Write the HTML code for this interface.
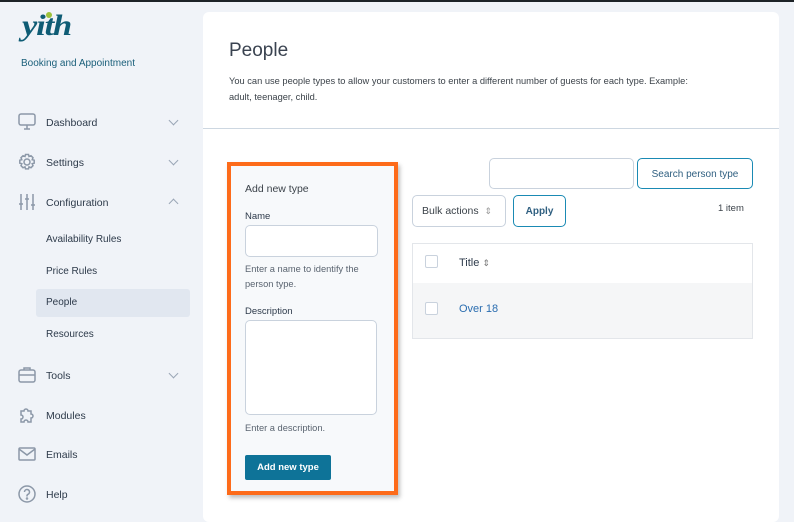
<!DOCTYPE html>
<html><head><style>
*{box-sizing:border-box;margin:0;padding:0}
body{width:794px;height:510px;overflow:hidden;background:#f0f3f8;font-family:"Liberation Sans",sans-serif;position:relative;color:#3c434a}
.a{position:absolute}
.nav{font-size:10.5px;color:#2d3a4a}
.sub{font-size:10px;color:#2d3a4a}
.chev{width:7px;height:7px;border-right:1.5px solid #9aa6b6;border-bottom:1.5px solid #9aa6b6;transform:rotate(45deg)}
.up{transform:rotate(-135deg)}
</style></head><body>
<div class="a" style="left:0;top:0;width:794px;height:2px;background:#1d2327"></div>
<div class="a" style="left:22px;top:9px;font-family:'Liberation Serif',serif;font-style:italic;font-weight:bold;font-size:30px;color:#0f5c75;letter-spacing:-1px;transform:scaleX(1.15);transform-origin:left">yith</div>
<div class="a" style="left:46px;top:12px;width:6px;height:6px;border-radius:50%;background:#9dc23b"></div>
<div class="a" style="left:21px;top:58px;font-size:10px;color:#1a5f7a">Booking and Appointment</div>

<svg class="a" style="left:18px;top:113px" width="18" height="18" viewBox="0 0 18 18" fill="none" stroke="#8c98a8" stroke-width="1.5"><rect x="1" y="1" width="16" height="11" rx="2"/><path d="M6 16h6M9 12v4"/></svg>
<div class="a nav" style="left:46px;top:117px">Dashboard</div>
<div class="a chev" style="left:170px;top:117px"></div>
<svg class="a" style="left:18px;top:153px" width="18" height="18" viewBox="0 0 18 18" fill="none" stroke="#8c98a8" stroke-width="1.5"><circle cx="9" cy="9" r="3"/><path d="M7.5 1.5h3l.5 2 2-.8 2 2-.8 2 2 .5v3l-2 .5.8 2-2 2-2-.8-.5 2h-3l-.5-2-2 .8-2-2 .8-2-2-.5v-3l2-.5-.8-2 2-2 2 .8z"/></svg>
<div class="a nav" style="left:46px;top:157px">Settings</div>
<div class="a chev" style="left:170px;top:157px"></div>
<svg class="a" style="left:18px;top:193px" width="18" height="18" viewBox="0 0 18 18" fill="none" stroke="#8c98a8" stroke-width="1.5"><path d="M3 1v16M9 1v16M15 1v16"/><path d="M1 11h4M7 6h4M13 12h4"/></svg>
<div class="a nav" style="left:46px;top:197px">Configuration</div>
<div class="a chev up" style="left:170px;top:200px"></div>
<div class="a sub" style="left:46px;top:234px">Availability Rules</div>
<div class="a sub" style="left:46px;top:266px">Price Rules</div>
<div class="a" style="left:36px;top:289px;width:154px;height:28px;background:#e1e7f0;border-radius:3px"></div>
<div class="a sub" style="left:46px;top:297px">People</div>
<div class="a sub" style="left:46px;top:329px">Resources</div>
<svg class="a" style="left:18px;top:366px" width="18" height="18" viewBox="0 0 18 18" fill="none" stroke="#8c98a8" stroke-width="1.5"><rect x="1" y="4" width="16" height="12" rx="2"/><path d="M6 4V2h6v2M1 9h16"/></svg>
<div class="a nav" style="left:46px;top:370px">Tools</div>
<div class="a chev" style="left:170px;top:370px"></div>
<svg class="a" style="left:18px;top:406px" width="18" height="18" viewBox="0 0 18 18" fill="none" stroke="#8c98a8" stroke-width="1.5"><path d="M3 5h3a2 2 0 1 1 4 0h3v3a2 2 0 1 1 0 4v4H10a2 2 0 1 0-4 0H3v-3a2 2 0 1 0 0-4z"/></svg>
<div class="a nav" style="left:46px;top:410px">Modules</div>
<svg class="a" style="left:18px;top:446px" width="18" height="16" viewBox="0 0 18 16" fill="none" stroke="#8c98a8" stroke-width="1.5"><rect x="1" y="2" width="16" height="12" rx="1"/><path d="M1 3l8 6 8-6"/></svg>
<div class="a nav" style="left:46px;top:449px">Emails</div>
<svg class="a" style="left:18px;top:485px" width="18" height="18" viewBox="0 0 18 18" fill="none" stroke="#8c98a8" stroke-width="1.5"><circle cx="9" cy="9" r="8"/><path d="M6.5 7a2.5 2.5 0 1 1 3.5 2.3c-.7.3-1 .8-1 1.5v.7"/><circle cx="9" cy="13.5" r=".5"/></svg>
<div class="a nav" style="left:46px;top:489px">Help</div>

<div class="a" style="left:203px;top:12px;width:576px;height:510px;background:#fff;border-radius:6px"></div>
<div class="a" style="left:229px;top:40px;font-size:19px;color:#3a4350">People</div>
<div class="a" style="left:229px;top:73px;font-size:9.3px;line-height:16px;color:#3c434a;width:520px">You can use people types to allow your customers to enter a different number of guests for each type. Example:<br>adult, teenager, child.</div>
<div class="a" style="left:203px;top:128px;width:576px;height:1px;background:#cdd7e1"></div>

<div class="a" style="left:227px;top:162px;width:171px;height:333px;background:#f7f9fb;border:4px solid #fd6b1a;box-shadow:2px 3px 4px rgba(0,0,0,.25)"></div>
<div class="a" style="left:245px;top:183px;font-size:10.5px;color:#3c434a">Add new type</div>
<div class="a" style="left:245px;top:211px;font-size:9.5px;color:#2d3a4a">Name</div>
<div class="a" style="left:245px;top:225px;width:133px;height:32px;background:#fff;border:1px solid #c9d2dd;border-radius:5px"></div>
<div class="a" style="left:245px;top:262px;font-size:9.3px;line-height:15px;color:#5a6470;width:140px">Enter a name to identify the person type.</div>
<div class="a" style="left:245px;top:306px;font-size:9.5px;color:#2d3a4a">Description</div>
<div class="a" style="left:245px;top:320px;width:132px;height:95px;background:#fff;border:1px solid #c9d2dd;border-radius:5px"></div>
<div class="a" style="left:245px;top:423px;font-size:9.3px;color:#5a6470">Enter a description.</div>
<div class="a" style="left:245px;top:455px;width:86px;height:25px;background:#0e7398;border-radius:2px;color:#fff;font-size:9.5px;font-weight:bold;text-align:center;line-height:25px">Add new type</div>

<div class="a" style="left:489px;top:158px;width:145px;height:31px;border:1px solid #c9d2dd;border-radius:5px"></div>
<div class="a" style="left:637px;top:158px;width:116px;height:31px;border:1px solid #1a8ab4;border-radius:5px;font-size:10px;color:#2f5f80;text-align:center;line-height:31px">Search person type</div>
<div class="a" style="left:412px;top:195px;width:94px;height:32px;border:1px solid #c9d2dd;border-radius:5px;font-size:10.5px;color:#3c434a;padding-left:9px;line-height:30px">Bulk actions <span style="color:#999;font-size:9px;margin-left:3px">⇕</span></div>
<div class="a" style="left:513px;top:195px;width:53px;height:32px;border:1px solid #1a8ab4;border-radius:5px;font-size:10px;font-weight:bold;color:#2f5f80;text-align:center;line-height:32px">Apply</div>
<div class="a" style="left:718px;top:203px;font-size:9.5px;color:#3c434a">1 item</div>
<div class="a" style="left:412px;top:243px;width:341px;height:96px;border:1px solid #e3e6ea"></div>
<div class="a" style="left:413px;top:283px;width:339px;height:55px;background:#f5f6f7"></div>
<div class="a" style="left:425px;top:255px;width:13px;height:13px;border:1px solid #c9d2dd;border-radius:2px;background:#fff"></div>
<div class="a" style="left:459px;top:257px;font-size:11px;color:#2d3a4a">Title <span style="font-size:9px;color:#777">⇕</span></div>
<div class="a" style="left:425px;top:302px;width:13px;height:13px;border:1px solid #c9d2dd;border-radius:2px;background:#fff"></div>
<div class="a" style="left:459px;top:303px;font-size:11px;color:#2a6db0">Over 18</div>
</body></html>
